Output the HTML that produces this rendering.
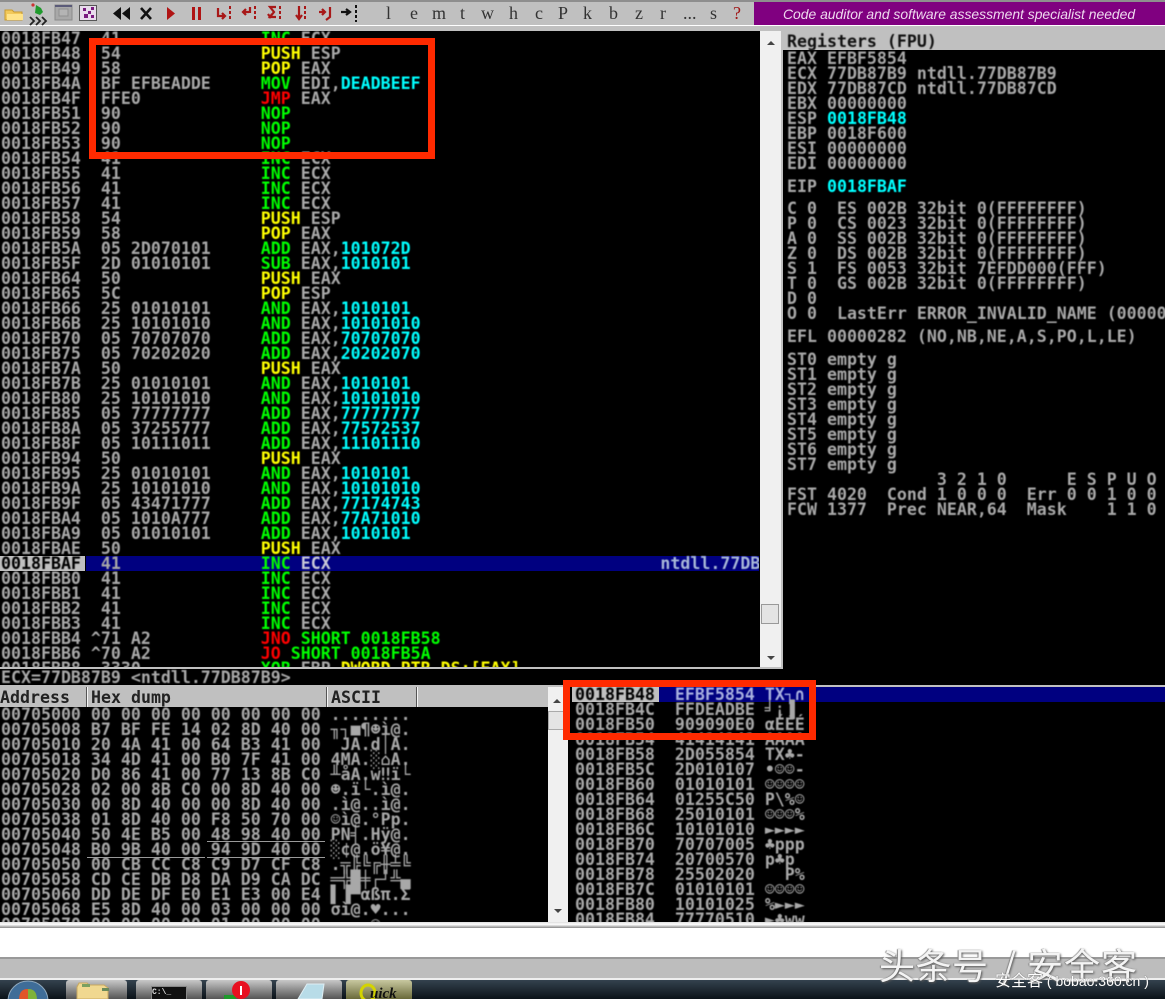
<!DOCTYPE html>
<html><head><meta charset="utf-8"><style>
html,body{margin:0;padding:0;background:#000}
#r{position:relative;width:1165px;height:999px;overflow:hidden;background:#000}
.a{position:absolute}
pre{margin:0;position:absolute;font:bold 16.6px/15px "DejaVu Sans Mono","Liberation Mono",monospace;color:#a8a8a8;white-space:pre;filter:blur(.4px)}
.y{color:#ff0}.g{color:#0f0}.e{color:#f00}.c{color:#0ff}.k{color:#000}
.p{position:absolute;overflow:hidden}
.t{position:absolute;font:18px "Liberation Serif",serif;color:#333;top:3px;filter:blur(.3px)}
.hd{position:absolute;top:687px;height:20px;background:#c0c0c0;border-right:1px solid #555;border-left:1px solid #f4f4f4;box-sizing:border-box;font:bold 16.6px/21px "DejaVu Sans Mono",monospace;color:#222;white-space:pre;overflow:hidden;filter:blur(.3px)}
.box{position:absolute;border:7px solid #ff2a00;box-sizing:border-box}
.sb{position:absolute;background:#f0f0f0}
.btn{position:absolute;top:980px;height:19px;border-radius:3px 3px 0 0;background:linear-gradient(#c8c8c8,#555);overflow:hidden}
</style></head><body><div id="r">

<!-- toolbar -->
<div class="a" style="left:0;top:0;width:1165px;height:31px;background:#c0c0c0"></div>
<div class="a" style="left:0;top:0;width:1165px;height:2px;background:#8e8e8e"></div>
<div class="a" style="left:0;top:25px;width:1165px;height:1px;background:#fff"></div>
<svg class="a" style="left:0;top:0" width="380" height="31" viewBox="0 0 380 31">
<path d="M5 10h7l2 2h8v8H5z" fill="#f2c95a" stroke="#c89a30"/>
<rect x="7" y="14" width="16" height="6" fill="#ffe48a"/>
<path d="M36 5l5 3 2 4-3 3-5-2z" fill="#1f9a2c"/><circle cx="33" cy="5" r="1.6" fill="#c33"/>
<path d="M30 17l4 4-4 4M36 17l4 4-4 4M42 17l4 4-4 4" fill="none" stroke="#222" stroke-width="1.8"/>
<rect x="55" y="5" width="17" height="15" fill="#a8a8a8" stroke="#8a8a8a"/><rect x="55" y="5" width="17" height="2" fill="#5a5a78"/><rect x="59" y="9" width="9" height="7" fill="#b4b4b4" stroke="#8f8f8f"/>
<rect x="79.500" y="5.500" width="17" height="15" fill="#e8dcec" stroke="#555"/>
<path d="M83 8h3v3h-3zM88 11h3v3h-3zM91 7h3v3h-3zM84 14h4v4h-4zM91 15h3v3h-3z" fill="#7a1a80"/>
<path d="M121 7v13l-8-6.500zM130 7v13l-8-6.500z" fill="#111"/>
<path d="M141 8l10 11M151 8l-10 11" stroke="#111" stroke-width="2.600" fill="none"/>
<path d="M167 7l8 6.500-8 6.500z" fill="#b01414"/>
<path d="M192 7h3v13h-3zM198 7h3v13h-3z" fill="#b01414"/>
<g fill="none" stroke="#a81818" stroke-width="2.200">
<path d="M218 8v8h7M222 13l3 3-3 3"/>
<path d="M249 12h-5M246 9l-3 3 3 3M250 7v6"/>
<path d="M276 7h-6l4 5-4 5h6M268 14l2 3 2-3"/>
<path d="M299 6v13M296 15l3 4 3-4"/>
<path d="M319 12h6M322 9l3 3-3 3M330 7v10l-4 3"/>
</g>
<g fill="#a81818"><rect x="229" y="6" width="2" height="3"/><rect x="229" y="11" width="2" height="3"/><rect x="229" y="16" width="2" height="3"/><rect x="254" y="6" width="2" height="3"/><rect x="254" y="11" width="2" height="3"/><rect x="254" y="16" width="2" height="3"/><rect x="279" y="6" width="2" height="3"/><rect x="279" y="11" width="2" height="3"/><rect x="279" y="16" width="2" height="3"/><rect x="304" y="6" width="2" height="3"/><rect x="304" y="11" width="2" height="3"/><rect x="304" y="16" width="2" height="3"/></g>
<path d="M341 12h7M346 9l4 3-4 3" stroke="#111" stroke-width="2.200" fill="none"/>
<g fill="#111"><rect x="355" y="5" width="2" height="3"/><rect x="355" y="10" width="2" height="3"/><rect x="355" y="15" width="2" height="3"/><rect x="355" y="20" width="2" height="2"/></g>
</svg>
<span class="t" style="left:386px">l</span><span class="t" style="left:410px">e</span><span class="t" style="left:432px">m</span><span class="t" style="left:460px">t</span><span class="t" style="left:481px">w</span><span class="t" style="left:509px">h</span><span class="t" style="left:535px">c</span><span class="t" style="left:558px">P</span><span class="t" style="left:583px">k</span><span class="t" style="left:609px">b</span><span class="t" style="left:635px">z</span><span class="t" style="left:660px">r</span><span class="t" style="left:683px">...</span><span class="t" style="left:710px">s</span><span class="t" style="left:733px;color:#a01818">?</span>
<div class="a" style="left:754px;top:2px;width:411px;height:23px;background:#800080"></div>
<div class="a" style="left:783px;top:6px;font:italic 13.9px/16px 'Liberation Sans',sans-serif;color:#eed8ee;white-space:nowrap">Code auditor and software assessment specialist needed</div>

<!-- disasm -->
<div class="a" style="left:86px;top:556px;width:673px;height:15px;background:#000080"></div>
<div class="a" style="left:0;top:556px;width:85px;height:15px;background:#c0c0c0"></div>
<div class="p" style="left:0;top:31px;width:759px;height:636px">
<pre style="left:1px;top:0">0018FB47  41              <span class="g">INC</span> ECX
0018FB48  54              <span class="y">PUSH</span> ESP
0018FB49  58              <span class="y">POP</span> EAX
0018FB4A  BF EFBEADDE     <span class="g">MOV</span> EDI,<span class="c">DEADBEEF</span>
0018FB4F  FFE0            <span class="e">JMP</span> EAX
0018FB51  90              <span class="g">NOP</span>
0018FB52  90              <span class="g">NOP</span>
0018FB53  90              <span class="g">NOP</span>
0018FB54  41              <span class="g">INC</span> ECX
0018FB55  41              <span class="g">INC</span> ECX
0018FB56  41              <span class="g">INC</span> ECX
0018FB57  41              <span class="g">INC</span> ECX
0018FB58  54              <span class="y">PUSH</span> ESP
0018FB59  58              <span class="y">POP</span> EAX
0018FB5A  05 2D070101     <span class="g">ADD</span> EAX,<span class="c">101072D</span>
0018FB5F  2D 01010101     <span class="g">SUB</span> EAX,<span class="c">1010101</span>
0018FB64  50              <span class="y">PUSH</span> EAX
0018FB65  5C              <span class="y">POP</span> ESP
0018FB66  25 01010101     <span class="g">AND</span> EAX,<span class="c">1010101</span>
0018FB6B  25 10101010     <span class="g">AND</span> EAX,<span class="c">10101010</span>
0018FB70  05 70707070     <span class="g">ADD</span> EAX,<span class="c">70707070</span>
0018FB75  05 70202020     <span class="g">ADD</span> EAX,<span class="c">20202070</span>
0018FB7A  50              <span class="y">PUSH</span> EAX
0018FB7B  25 01010101     <span class="g">AND</span> EAX,<span class="c">1010101</span>
0018FB80  25 10101010     <span class="g">AND</span> EAX,<span class="c">10101010</span>
0018FB85  05 77777777     <span class="g">ADD</span> EAX,<span class="c">77777777</span>
0018FB8A  05 37255777     <span class="g">ADD</span> EAX,<span class="c">77572537</span>
0018FB8F  05 10111011     <span class="g">ADD</span> EAX,<span class="c">11101110</span>
0018FB94  50              <span class="y">PUSH</span> EAX
0018FB95  25 01010101     <span class="g">AND</span> EAX,<span class="c">1010101</span>
0018FB9A  25 10101010     <span class="g">AND</span> EAX,<span class="c">10101010</span>
0018FB9F  05 43471777     <span class="g">ADD</span> EAX,<span class="c">77174743</span>
0018FBA4  05 1010A777     <span class="g">ADD</span> EAX,<span class="c">77A71010</span>
0018FBA9  05 01010101     <span class="g">ADD</span> EAX,<span class="c">1010101</span>
0018FBAE  50              <span class="y">PUSH</span> EAX
<span class="k">0018FBAF</span>  41              <span class="g">INC</span> <span style="color:#c8c8d8">ECX</span>                                 <span style="color:#a8b8d8">ntdll.77DB87B9</span>
0018FBB0  41              <span class="g">INC</span> ECX
0018FBB1  41              <span class="g">INC</span> ECX
0018FBB2  41              <span class="g">INC</span> ECX
0018FBB3  41              <span class="g">INC</span> ECX
0018FBB4 ^71 A2           <span class="e">JNO</span> <span class="g">SHORT 0018FB58</span>
0018FBB6 ^70 A2           <span class="e">JO</span> <span class="g">SHORT 0018FB5A</span>
0018FBB8  3330            <span class="g">XOR</span> EBP,<span class="y">DWORD PTR DS:[EAX]</span></pre>
</div>
<div class="sb" style="left:760px;top:31px;width:21px;height:636px"></div>
<div class="a" style="left:761px;top:604px;width:18px;height:20px;background:#e4e4e4;border:1px solid #999;box-sizing:border-box"></div>
<svg class="a" style="left:760px;top:31px" width="21" height="636"><path d="M7 14l4-4 4 4z" fill="#444"/><path d="M7 625l4 4 4-4z" fill="#444"/></svg>

<!-- registers -->
<div class="a" style="left:783px;top:31px;width:382px;height:19px;background:#c0c0c0"></div>
<pre style="left:787px;top:34px;color:#111">Registers (FPU)</pre>
<div class="p" style="left:783px;top:50px;width:382px;height:470px">
<pre style="left:4px;top:1px">EAX EFBF5854
ECX 77DB87B9 ntdll.77DB87B9
EDX 77DB87CD ntdll.77DB87CD
EBX 00000000
ESP <span class="c">0018FB48</span>
EBP 0018F600
ESI 00000000
EDI 00000000</pre>
<pre style="left:4px;top:129px">EIP <span class="c">0018FBAF</span></pre>
<pre style="left:4px;top:151px">C 0  ES 002B 32bit 0(FFFFFFFF)
P 0  CS 0023 32bit 0(FFFFFFFF)
A 0  SS 002B 32bit 0(FFFFFFFF)
Z 0  DS 002B 32bit 0(FFFFFFFF)
S 1  FS 0053 32bit 7EFDD000(FFF)
T 0  GS 002B 32bit 0(FFFFFFFF)
D 0
O 0  LastErr ERROR_INVALID_NAME (00000</pre>
<pre style="left:4px;top:279px">EFL 00000282 (NO,NB,NE,A,S,PO,L,LE)</pre>
<pre style="left:4px;top:302px">ST0 empty g
ST1 empty g
ST2 empty g
ST3 empty g
ST4 empty g
ST5 empty g
ST6 empty g
ST7 empty g
               3 2 1 0      E S P U O Z
FST 4020  Cond 1 0 0 0  Err 0 0 1 0 0 0
FCW 1377  Prec NEAR,64  Mask    1 1 0</pre>
</div>

<!-- status + dividers -->
<div class="a" style="left:0;top:667px;width:782px;height:2px;background:#c0c0c0"></div>
<div class="a" style="left:781px;top:31px;width:2px;height:638px;background:#c0c0c0"></div>
<pre style="left:1px;top:670px">ECX=77DB87B9 &lt;ntdll.77DB87B9&gt;</pre>
<div class="a" style="left:0;top:685px;width:1165px;height:2px;background:#c0c0c0"></div>

<!-- dump -->
<div class="hd" style="left:0;width:87px;border-left:0">Address</div>
<div class="hd" style="left:87px;width:240px;padding-left:3px">Hex dump</div>
<div class="hd" style="left:327px;width:90px;padding-left:3px">ASCII</div>
<div class="a" style="left:417px;top:687px;width:131px;height:20px;background:#c0c0c0;border-left:1px solid #f4f4f4;box-sizing:border-box"></div>
<div class="p" style="left:0;top:707px;width:545px;height:215px">
<div class="a" style="left:207px;top:134px;width:118px;height:1px;background:#999"></div>
<div class="a" style="left:87px;top:150px;width:118px;height:1px;background:#999"></div>
<div class="a" style="left:207px;top:150px;width:118px;height:1px;background:#999"></div>
<pre style="left:1px;top:0">00705000 00 00 00 00 00 00 00 00 ........
00705008 B7 BF FE 14 02 8D 40 00 ╖┐■¶☻ì@.
00705010 20 4A 41 00 64 B3 41 00  JA.d│A.
00705018 34 4D 41 00 B0 7F 41 00 4MA.░⌂A.
00705020 D0 86 41 00 77 13 8B C0 ╨åA.w‼ï└
00705028 02 00 8B C0 00 8D 40 00 ☻.ï└.ì@.
00705030 00 8D 40 00 00 8D 40 00 .ì@..ì@.
00705038 01 8D 40 00 F8 50 70 00 ☺ì@.°Pp.
00705040 50 4E B5 00 48 98 40 00 PN╡.Hÿ@.
00705048 B0 9B 40 00 94 9D 40 00 ░¢@.ö¥@.
00705050 00 CB CC C8 C9 D7 CF C8 .╦╠╚╔╫╧╚
00705058 CD CE DB D8 DA D9 CA DC ═╬█╪┌┘╩▄
00705060 DD DE DF E0 E1 E3 00 E4 ▌▐▀αßπ.Σ
00705068 E5 8D 40 00 03 00 00 00 σì@.♥...
00705070 00 00 00 00 01 00 00 00 ....☺...</pre>
</div>
<div class="sb" style="left:548px;top:687px;width:20px;height:235px"></div>
<div class="a" style="left:548px;top:711px;width:18px;height:19px;background:#e4e4e4;border:1px solid #aaa;box-sizing:border-box"></div>
<svg class="a" style="left:548px;top:687px" width="20" height="235"><path d="M5 16l4-4 4 4z" fill="#444"/><path d="M6 222l4 4 4-4z" fill="#444"/></svg>

<!-- stack -->
<div class="a" style="left:659px;top:687px;width:506px;height:15px;background:#000080"></div>
<div class="a" style="left:572px;top:687px;width:87px;height:15px;background:#c0c0c0"></div>
<div class="p" style="left:572px;top:687px;width:593px;height:235px">
<pre style="left:3px;top:0"><span class="k">0018FB48</span>  <span style="color:#a8b0e0">EFBF5854 TX┐∩</span>
0018FB4C  FFDEADBE ╛¡▐ 
0018FB50  909090E0 αÉÉÉ
0018FB54  41414141 AAAA
0018FB58  2D055854 TX♣-
0018FB5C  2D010107 •☺☺-
0018FB60  01010101 ☺☺☺☺
0018FB64  01255C50 P\%☺
0018FB68  25010101 ☺☺☺%
0018FB6C  10101010 ►►►►
0018FB70  70707005 ♣ppp
0018FB74  20700570 p♣p 
0018FB78  25502020   P%
0018FB7C  01010101 ☺☺☺☺
0018FB80  10101025 %►►►
0018FB84  77770510 ►♣ww</pre>
</div>

<!-- red boxes -->
<div class="box" style="left:89px;top:38px;width:346px;height:121px"></div>
<div class="box" style="left:563px;top:680px;width:253px;height:60px"></div>

<!-- bottom -->
<div class="a" style="left:0;top:922px;width:1165px;height:6px;background:linear-gradient(#ddd,#fff 40%,#888)"></div>
<div class="a" style="left:0;top:928px;width:1165px;height:29px;background:#fff"></div>
<div class="a" style="left:0;top:957px;width:1165px;height:2px;background:#999"></div>
<div class="a" style="left:0;top:959px;width:1165px;height:19px;background:#bdbdbd"></div>
<div class="a" style="left:0;top:978px;width:1165px;height:2px;background:#eee"></div>
<div class="a" style="left:0;top:980px;width:1165px;height:19px;background:linear-gradient(#34424e,#0b1218)"></div>

<svg class="a" style="left:0;top:980px" width="60" height="19"><circle cx="28" cy="21" r="20" fill="#3f6d98" stroke="#8fa8bc"/><path d="M28 9c-6 0-9 3-9 12h9z" fill="#e0562a"/><path d="M28 9c6 0 9 3 9 12h-9z" fill="#7fb23a"/></svg>
<div class="btn" style="left:66px;width:61px"><svg width="61" height="19"><path d="M11 7l2-4h8l2 2h15l4 3v11H11z" fill="#f0d890" stroke="#c8a860"/><rect x="16" y="4" width="8" height="3" fill="#7aa060"/><rect x="36" y="8" width="7" height="3" fill="#6a8a5a"/></svg></div>
<div class="btn" style="left:136px;width:66px"><div class="a" style="left:15px;top:6px;width:36px;height:14px;background:#111;border:1px solid #888;box-sizing:border-box;color:#ddd;font:bold 8px/12px 'Liberation Mono',monospace">C:\_</div></div>
<div class="btn" style="left:206px;width:66px"><svg width="66" height="19"><rect x="18" y="15" width="12" height="4" fill="#1f9a2c"/><circle cx="35" cy="10" r="9" fill="#e81020"/><rect x="34" y="6" width="2" height="9" fill="#fff"/></svg></div>
<div class="btn" style="left:276px;width:66px"><svg width="66" height="19"><path d="M22 19l9-15h17l-2 15z" fill="#b8dce8" stroke="#dfeef4"/></svg></div>
<div class="btn" style="left:346px;width:66px;background:linear-gradient(#c8c8a0,#6a6a3a)"><svg width="66" height="19"><ellipse cx="22" cy="13" rx="7" ry="8" fill="none" stroke="#d4d400" stroke-width="3"/><text x="24" y="18" font-family="Liberation Serif" font-style="italic" font-weight="bold" font-size="15" fill="#111">uick</text></svg></div>

<!-- watermark -->
<div class="a" style="left:879px;top:942px;font:36px/44px 'Noto Sans CJK SC','Liberation Sans',sans-serif;color:#f4f4f4;white-space:pre;letter-spacing:.5px;text-shadow:1px 1px 2px #555,-1px 0 1px #888">头条号</div>
<div class="a" style="left:1002px;top:942px;font:36px/44px 'Noto Sans CJK SC','Liberation Sans',sans-serif;color:#f4f4f4;white-space:pre;text-shadow:1px 1px 2px #555,-1px 0 1px #888">/</div>
<div class="a" style="left:1027px;top:942px;font:36px/44px 'Noto Sans CJK SC','Liberation Sans',sans-serif;color:#f4f4f4;white-space:pre;letter-spacing:1px;text-shadow:1px 1px 2px #555,-1px 0 1px #888">安全客</div>
<div class="a" style="left:995px;top:971px;font:14px/20px 'Liberation Sans','Noto Sans CJK SC',sans-serif;color:#fff;white-space:nowrap;text-shadow:0 0 1px #333"><span style="font-size:16px">安全客</span> ( bobao.360.cn )</div>
</div></body></html>
